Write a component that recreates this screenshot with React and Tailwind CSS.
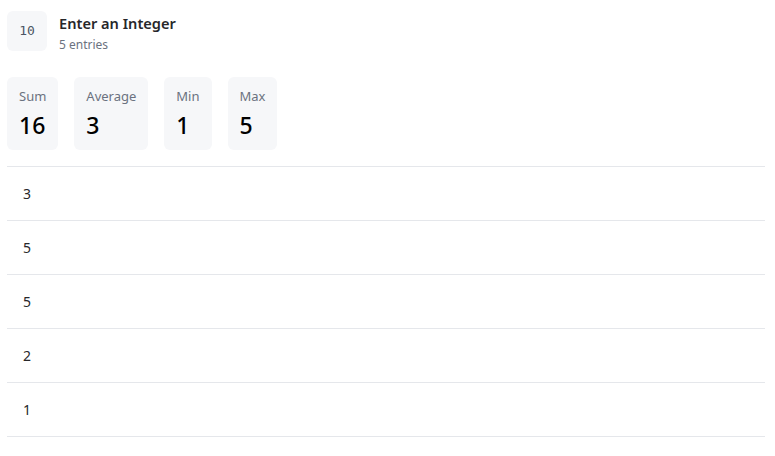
import React from 'react';

const entries = [3, 5, 5, 2, 1];

export default function App() {
  const sum = entries.reduce((s, v) => s + v, 0);
  const stats = [
    { label: 'Sum', value: sum },
    { label: 'Average', value: Math.round(sum / entries.length) },
    { label: 'Min', value: Math.min(...entries) },
    { label: 'Max', value: Math.max(...entries) },
  ];

  return (
    <div className="bg-white pl-[7px] pr-[10px] pt-[11px] text-[#18181b]" style={{ fontFamily: '"Noto Sans", sans-serif' }}>
      {/* Header */}
      <div className="flex items-start gap-3">
        <div className="w-10 h-10 rounded-md bg-[#f6f7f9] flex items-center justify-center text-[13px] text-[#4b5563]" style={{ fontFamily: '"DejaVu Sans Mono", monospace' }}>
          10
        </div>
        <div className="flex flex-col">
          <div className="text-[14.6px] font-semibold leading-[22px] text-[#27272a] mt-px">Enter an Integer</div>
          <div className="text-[12px] text-[#6b7280] leading-4 mt-[3px]">5 entries</div>
        </div>
      </div>

      {/* Stats */}
      <div className="flex gap-4 mt-[24px]">
        {stats.map((s) => (
          <div key={s.label} className="bg-[#f6f7f9] rounded-md px-3 pt-[10px] h-[73px]">
            <div className="text-[13px] text-[#6b7280] leading-[18px]">{s.label}</div>
            <div className="text-[23px] font-medium leading-[30px] mt-[5px] text-black">{s.value}</div>
          </div>
        ))}
      </div>

      {/* Entries */}
      <div className="mt-4 border-t border-[#e5e7eb]">
        {entries.map((v, i) => (
          <div key={i} className="h-[54px] border-b border-[#e5e7eb] flex items-center pl-4 text-[14px] text-[#27272a]">
            {v}
          </div>
        ))}
      </div>
    </div>
  );
}
